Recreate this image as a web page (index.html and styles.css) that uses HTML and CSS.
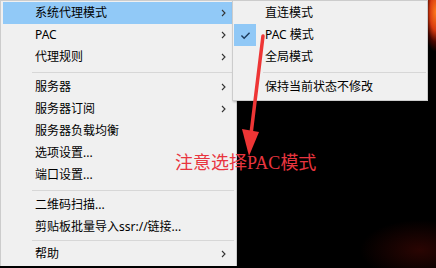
FILE: index.html
```html
<!DOCTYPE html>
<html lang="zh-CN">
<head>
<meta charset="utf-8">
<link rel="stylesheet" href="styles.css">
</head>
<body>
<div class="screen">
  <div class="menu">
    <div class="item active"><span class="label">系统代理模式</span><svg class="chev" viewBox="0 0 5 8"><polyline points="1,1 4,4 1,7"/></svg></div>
    <div class="item"><span class="label">PAC</span><svg class="chev" viewBox="0 0 5 8"><polyline points="1,1 4,4 1,7"/></svg></div>
    <div class="item"><span class="label">代理规则</span><svg class="chev" viewBox="0 0 5 8"><polyline points="1,1 4,4 1,7"/></svg></div>
    <div class="sep"></div>
    <div class="item"><span class="label">服务器</span><svg class="chev" viewBox="0 0 5 8"><polyline points="1,1 4,4 1,7"/></svg></div>
    <div class="item"><span class="label">服务器订阅</span><svg class="chev" viewBox="0 0 5 8"><polyline points="1,1 4,4 1,7"/></svg></div>
    <div class="item"><span class="label">服务器负载均衡</span></div>
    <div class="item"><span class="label">选项设置...</span></div>
    <div class="item"><span class="label">端口设置...</span></div>
    <div class="sep"></div>
    <div class="item"><span class="label">二维码扫描...</span></div>
    <div class="item"><span class="label">剪贴板批量导入ssr://链接...</span></div>
    <div class="sep short"></div>
    <div class="item"><span class="label">帮助</span><svg class="chev" viewBox="0 0 5 8"><polyline points="1,1 4,4 1,7"/></svg></div>
  </div>

  <div class="submenu">
    <div class="sitem"><span class="slabel">直连模式</span></div>
    <div class="sitem"><span class="check"><svg viewBox="0 0 12 10"><polyline points="1.5,5 4.5,8 10.5,2"/></svg></span><span class="slabel">PAC 模式</span></div>
    <div class="sitem"><span class="slabel">全局模式</span></div>
    <div class="ssep"></div>
    <div class="sitem"><span class="slabel">保持当前状态不修改</span></div>
  </div>

  <svg class="arrow" viewBox="0 0 436 268">
    <line x1="263" y1="36" x2="251" y2="134"/>
    <polygon points="242,129 259,132 249,156"/>
  </svg>

  <div class="note">注意选择<span class="latin">PAC</span>模式</div>
</div>
</body>
</html>
```

FILE: styles.css
```css
html, body {
  margin: 0;
  padding: 0;
}

body {
  background: #000;
  font-family: "Noto Sans", "Noto Sans CJK SC", sans-serif;
  font-size: 12px;
  color: #000;
}

.screen {
  position: relative;
  width: 436px;
  height: 268px;
  overflow: hidden;
  background:
    radial-gradient(ellipse 14px 40px at 436px 12px, #ff7a1a 0%, #d83a10 45%, rgba(120,10,0,0.6) 75%, rgba(0,0,0,0) 100%),
    radial-gradient(ellipse 60px 30px at 420px 250px, rgba(70,8,4,0.6) 0%, rgba(0,0,0,0) 100%),
    #000;
}

.menu {
  box-sizing: border-box;
  width: 237px;
  background: #f0f0f0;
  border: 1px solid #cccccc;
  border-bottom: none;
  padding: 1px 2px;
}

.item {
  height: 22px;
  display: flex;
  align-items: center;
  padding: 0 8px 0 32px;
  line-height: 22px;
}

.item.active {
  background: #91c9f7;
}

.label {
  flex: 1;
  white-space: nowrap;
}

.chev {
  width: 5px;
  height: 8px;
  fill: none;
  stroke: #333;
  stroke-width: 1.1;
}

.sep {
  height: 8px;
  display: flex;
  align-items: center;
  padding-left: 29px;
}

.sep.short {
  height: 5px;
}

.sep::before {
  content: "";
  flex: 1;
  height: 1px;
  background: #d7d7d7;
}

.submenu {
  position: absolute;
  left: 232px;
  top: 0;
  box-sizing: border-box;
  width: 196px;
  height: 101px;
  background: #f0f0f0;
  border: 1px solid #cccccc;
  padding: 1px 1px;
  box-shadow: 1px 1px 2px rgba(0,0,0,0.25);
}

.sitem {
  position: relative;
  height: 22px;
  display: flex;
  align-items: center;
  padding-left: 31px;
  line-height: 22px;
}

.check {
  position: absolute;
  left: 0;
  top: 0;
  width: 22px;
  height: 22px;
  background: #90c8f6;
  display: flex;
  align-items: center;
  justify-content: center;
}

.check svg {
  width: 11px;
  height: 9px;
  fill: none;
  stroke: #1d3b5c;
  stroke-width: 1.6;
}

.ssep {
  height: 8px;
  display: flex;
  align-items: center;
  padding-left: 29px;
}

.ssep::before {
  content: "";
  flex: 1;
  height: 1px;
  background: #d7d7d7;
}

.arrow {
  position: absolute;
  left: 0;
  top: 0;
  width: 436px;
  height: 268px;
  pointer-events: none;
}

.arrow line {
  stroke: #ee3535;
  stroke-width: 3.5;
  stroke-linecap: round;
}

.arrow polygon {
  fill: #ee3535;
}

.note {
  position: absolute;
  left: 175px;
  top: 150px;
  font-family: "Noto Sans CJK SC", sans-serif;
  font-size: 18px;
  line-height: 22px;
  color: #e8353f;
  white-space: nowrap;
}

.note .latin {
  font-family: "Liberation Serif", serif;
  font-size: 18px;
}
```
